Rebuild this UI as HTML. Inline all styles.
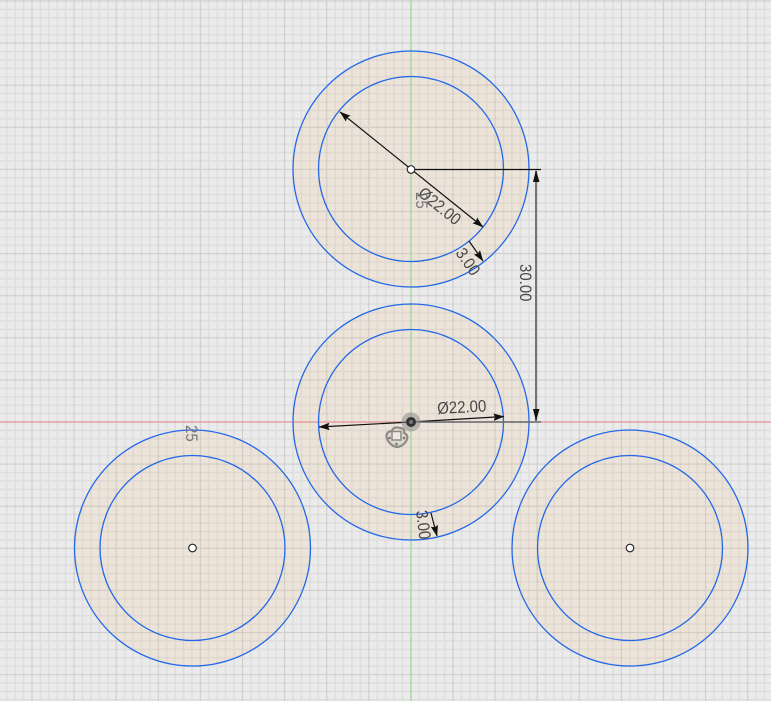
<!DOCTYPE html>
<html><head><meta charset="utf-8">
<style>
html,body{margin:0;padding:0;background:#ebebeb;width:771px;height:701px;overflow:hidden}
svg{display:block;position:absolute;left:0;top:0}
text{font-family:"Liberation Sans",sans-serif;font-size:15px;fill:#484848}
</style></head>
<body>
<svg width="771" height="701" viewBox="0 0 771 701" xmlns="http://www.w3.org/2000/svg">
<defs>
<pattern id="g" x="32" y="1" width="42.1" height="42.1" patternUnits="userSpaceOnUse">
<path d="M8.42 0V42.1M16.84 0V42.1M25.26 0V42.1M33.68 0V42.1M0 8.42H42.1M0 16.84H42.1M0 25.26H42.1M0 33.68H42.1" stroke="#a8a8a8" stroke-opacity=".2" stroke-width="1.5" fill="none"/>
<path d="M0 0V42.1M0 0H42.1M42.1 0V42.1M0 42.1H42.1" stroke="#a0a0a0" stroke-opacity=".36" stroke-width="1.2" fill="none"/>
</pattern>
<marker id="a" markerWidth="11" markerHeight="8" refX="10.500" refY="4" orient="auto-start-reverse" markerUnits="userSpaceOnUse"><path d="M0 .3L11 4L0 7.700L1.500 4Z" fill="#111"/></marker>
</defs>
<rect width="771" height="701" fill="#ebebeb"/>
<g fill="#ede4d9" stroke="none">
<circle cx="411" cy="169" r="118"/>
<circle cx="411" cy="422" r="118"/>
<circle cx="192.500" cy="548" r="118"/>
<circle cx="630" cy="548" r="118"/>
</g>
<rect width="771" height="701" fill="url(#g)"/>
<path d="M411 0V701" stroke="#a5d99b" stroke-width="1.3"/>
<path d="M0 422H411M540 422H771" stroke="#e6a3a3" stroke-width="1.5"/>
<g fill="none" stroke="#2268e8" stroke-width="1.3">
<circle cx="411" cy="169" r="118"/><circle cx="411" cy="169" r="92.500"/>
<circle cx="411" cy="422" r="118"/><circle cx="411" cy="422" r="92.500"/>
<circle cx="192.500" cy="548" r="118"/><circle cx="192.500" cy="548" r="92.500"/>
<circle cx="630" cy="548" r="118"/><circle cx="630" cy="548" r="92.500"/>
</g>
<g stroke="#111" stroke-width="1.2" fill="none">
<path d="M340 112L483 227" marker-start="url(#a)" marker-end="url(#a)"/>
<path d="M469 241L483 261" marker-end="url(#a)"/>
<path d="M411 169.500H541"/>
<path d="M319 427L411 422" marker-start="url(#a)"/>
<path d="M411 422L504 416.500" marker-end="url(#a)"/>
<path d="M431 513L437 536" marker-end="url(#a)"/>
</g>
<path d="M411 422H541" stroke="#666" stroke-width="1.5"/>
<path d="M536 171V421" stroke="#6a6a6a" stroke-width="1.800"/>
<path d="M536 170L533 182H539.500ZM536 421L533 409H539.500Z" fill="#111"/>
<text transform="translate(417,195) rotate(39) scale(1,1.12)">Ø22.00</text>
<text transform="translate(416,192) rotate(90) scale(1,1.1)" style="fill:#777">25</text>
<text transform="translate(455,253) rotate(55) scale(1,1.12)">3.00</text>
<text transform="translate(520,264) rotate(90) scale(1,1.12)">30.00</text>
<text transform="translate(437.500,414) rotate(-3) scale(1,1.12)">Ø22.00</text>
<text transform="translate(416,511) rotate(83) scale(1,1.12)">3.00</text>
<text transform="translate(186,425) rotate(90) scale(1,1.1)" style="fill:#777">25</text>
<g fill="#fff" stroke="#222" stroke-width="1.1">
<circle cx="411" cy="169.500" r="3.800"/>
<circle cx="192.500" cy="548" r="3.800"/>
<circle cx="630" cy="548" r="3.800"/>
</g>
<circle cx="411" cy="422" r="9.500" fill="#8a8a8a" fill-opacity=".55"/>
<circle cx="411" cy="422" r="5" fill="#333"/>
<circle cx="411" cy="422" r="2" fill="#777"/>
<g>
<path d="M386.500 437C386 433 389 431 392 431C393 427 397 427 400 428C403 428 405 430 404 433C407 434 408 437 407 439C406 443 402 446 398 447C393 447 388 443 386.500 437Z" fill="#ddd8d0" stroke="#8f8c87" stroke-width="2.200"/>
<path d="M392 431.500H401V440H392Z" fill="#efe9e1" stroke="#8c8a85" stroke-width="1.500"/>
<circle cx="389.500" cy="438" r="1.300" fill="#777"/><circle cx="396.500" cy="444" r="1.300" fill="#777"/><circle cx="404" cy="438" r="1.300" fill="#777"/>
</g>
</svg>
</body></html>
